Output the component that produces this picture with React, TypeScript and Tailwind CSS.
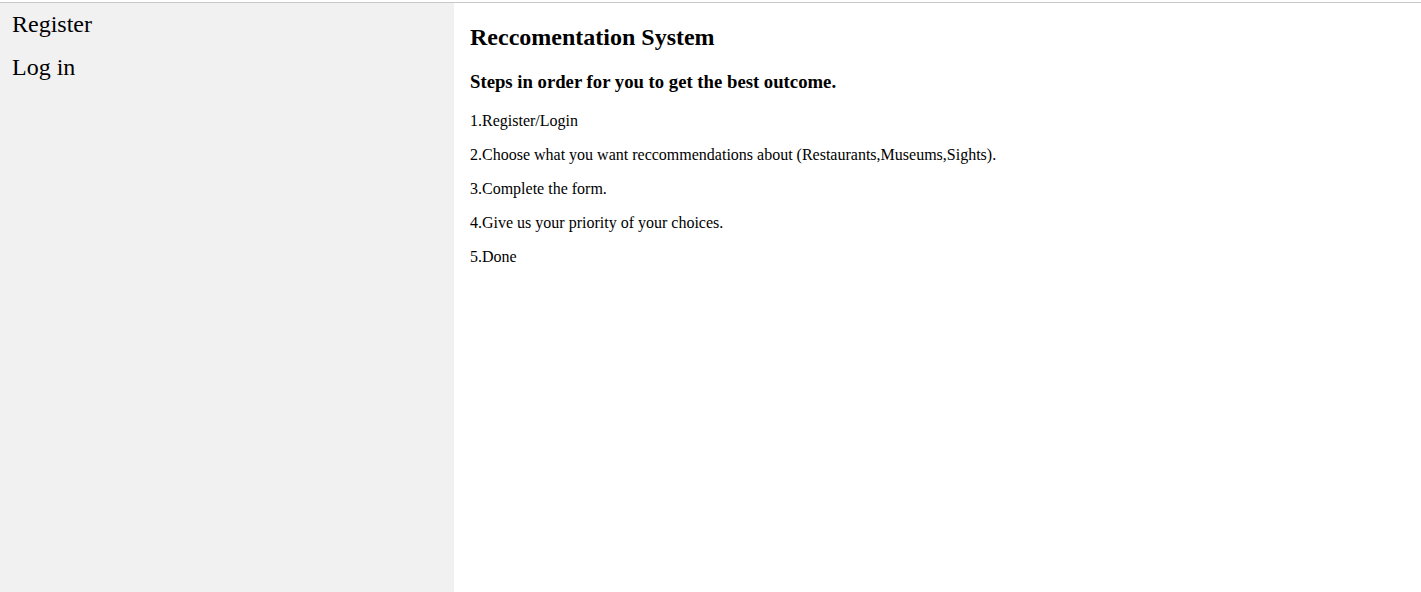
const STEPS = [
  '1.Register/Login',
  '2.Choose what you want reccommendations about (Restaurants,Museums,Sights).',
  '3.Complete the form.',
  '4.Give us your priority of your choices.',
  '5.Done',
]

export default function App() {
  return (
    <div className="min-h-[592px] bg-white text-black font-['Liberation_Serif',serif] flex flex-col">
      {/* top rule */}
      <div className="h-[2px] bg-white" />
      <div className="h-px bg-[#c8c8c8]" />

      <div className="flex flex-1">
        {/* Sidebar */}
        <nav className="w-[454px] bg-[#f1f1f1] flex flex-col shrink-0">
          <a href="#" className="block px-3 py-2 text-[24px] leading-[27px]">
            Register
          </a>
          <a href="#" className="block px-3 py-2 text-[24px] leading-[27px]">
            Log in
          </a>
        </nav>

        {/* Main */}
        <main className="flex-1 px-4">
          <h2 className="text-[24px] leading-[27px] font-bold mt-[21px] mb-[20px]">
            Reccomentation System
          </h2>
          <h3 className="text-[18.72px] leading-[21px] font-bold mb-[20px]">
            Steps in order for you to get the best outcome.
          </h3>
          <div className="flex flex-col gap-4 text-[16px] leading-[18px]">
            {STEPS.map((s) => (
              <p key={s}>{s}</p>
            ))}
          </div>
        </main>
      </div>
    </div>
  )
}
